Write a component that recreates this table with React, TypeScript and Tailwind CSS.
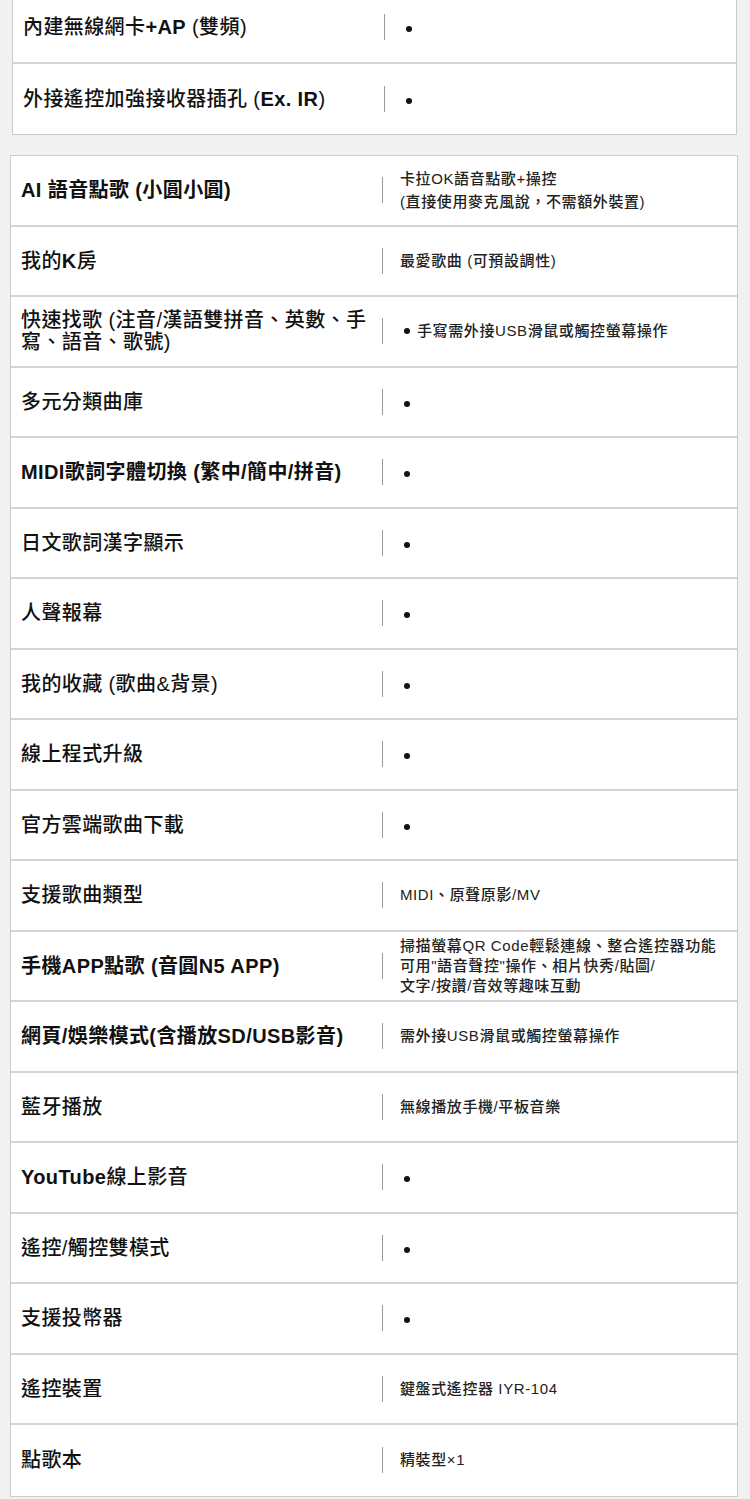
import React from 'react'

type Row = {
  label: React.ReactNode
  value?: React.ReactNode
  bold?: boolean
  valueLeading?: string
}

// ASCII runs a bit heavier than CJK, like the original rendering
function Mixed({ text }: { text: string }) {
  const parts = text.split(/([A-Za-z0-9+&.]+(?:[ .][A-Za-z0-9+&.]+)*)/)
  return (
    <>
      {parts.map((p, i) =>
        /[A-Za-z0-9]/.test(p) ? (
          <span key={i} className="font-bold">{p}</span>
        ) : (
          <span key={i}>{p}</span>
        )
      )}
    </>
  )
}

const Dot = () => <span className="inline-block w-[6px] h-[6px] rounded-full bg-[#111] ml-[4px]" />

const topRows: Row[] = [
  { label: <Mixed text="內建無線網卡+AP (雙頻)" /> },
  { label: <Mixed text="外接遙控加強接收器插孔 (Ex. IR)" /> },
]

const rows: Row[] = [
  {
    label: 'AI 語音點歌 (小圓小圓)',
    bold: true,
    valueLeading: 'leading-[23px]',
    value: (
      <>
        卡拉OK語音點歌+操控
        <br />
        (直接使用麥克風說，不需額外裝置)
      </>
    ),
  },
  { label: <Mixed text="我的K房" />, value: '最愛歌曲 (可預設調性)' },
  {
    label: (
      <>
        快速找歌 (注音/漢語雙拼音、英數、手
        <br />
        寫、語音、歌號)
      </>
    ),
    value: (
      <span className="flex items-center">
        <Dot />
        <span className="ml-[7px]">手寫需外接USB滑鼠或觸控螢幕操作</span>
      </span>
    ),
  },
  { label: '多元分類曲庫' },
  { label: 'MIDI歌詞字體切換 (繁中/簡中/拼音)', bold: true },
  { label: '日文歌詞漢字顯示' },
  { label: '人聲報幕' },
  { label: <Mixed text="我的收藏 (歌曲&背景)" /> },
  { label: '線上程式升級' },
  { label: '官方雲端歌曲下載' },
  { label: '支援歌曲類型', value: 'MIDI、原聲原影/MV' },
  {
    label: '手機APP點歌 (音圓N5 APP)',
    bold: true,
    valueLeading: 'leading-[20px]',
    value: (
      <>
        掃描螢幕QR Code輕鬆連線、整合遙控器功能
        <br />
        可用"語音聲控"操作、相片快秀/貼圖/
        <br />
        文字/按讚/音效等趣味互動
      </>
    ),
  },
  { label: '網頁/娛樂模式(含播放SD/USB影音)', bold: true, value: '需外接USB滑鼠或觸控螢幕操作' },
  { label: '藍牙播放', value: '無線播放手機/平板音樂' },
  { label: <Mixed text="YouTube線上影音" /> },
  { label: '遙控/觸控雙模式' },
  { label: '支援投幣器' },
  { label: '遙控裝置', value: '鍵盤式遙控器 IYR-104' },
  { label: '點歌本', value: '精裝型×1' },
]

function SpecRow({ row, last }: { row: Row; last: boolean }) {
  return (
    <div
      className={`flex items-center h-[70.5px] ${last ? '' : 'border-b-2 border-[#d4d4d4]'}`}
    >
      <div
        className={`w-[371px] pl-[10px] text-[20px] leading-[22px] tracking-[0.4px] text-[#111] ${
          row.bold ? 'font-bold' : 'font-medium'
        }`}
      >
        {row.label}
      </div>
      <div className="w-px h-[26px] bg-[#999999]" />
      <div
        className={`pl-[17px] text-[15px] tracking-[0.6px] font-medium text-[#222] ${
          row.valueLeading ?? 'leading-[20px]'
        }`}
      >
        {row.value ?? <Dot />}
      </div>
    </div>
  )
}

export default function App() {
  return (
    <div className="w-[750px] h-[1499px] overflow-hidden bg-[#f1f1f1] font-['Liberation_Sans','Noto_Sans_CJK_TC',sans-serif]">
      <div className="mt-[-8px] ml-[12px] w-[725px] bg-white border border-[#cccccc]">
        {topRows.map((r, i) => (
          <SpecRow key={i} row={r} last={i === topRows.length - 1} />
        ))}
      </div>
      <div className="mt-[20px] ml-[10px] w-[728px] bg-white border border-[#cccccc]">
        {rows.map((r, i) => (
          <SpecRow key={i} row={r} last={i === rows.length - 1} />
        ))}
      </div>
    </div>
  )
}
